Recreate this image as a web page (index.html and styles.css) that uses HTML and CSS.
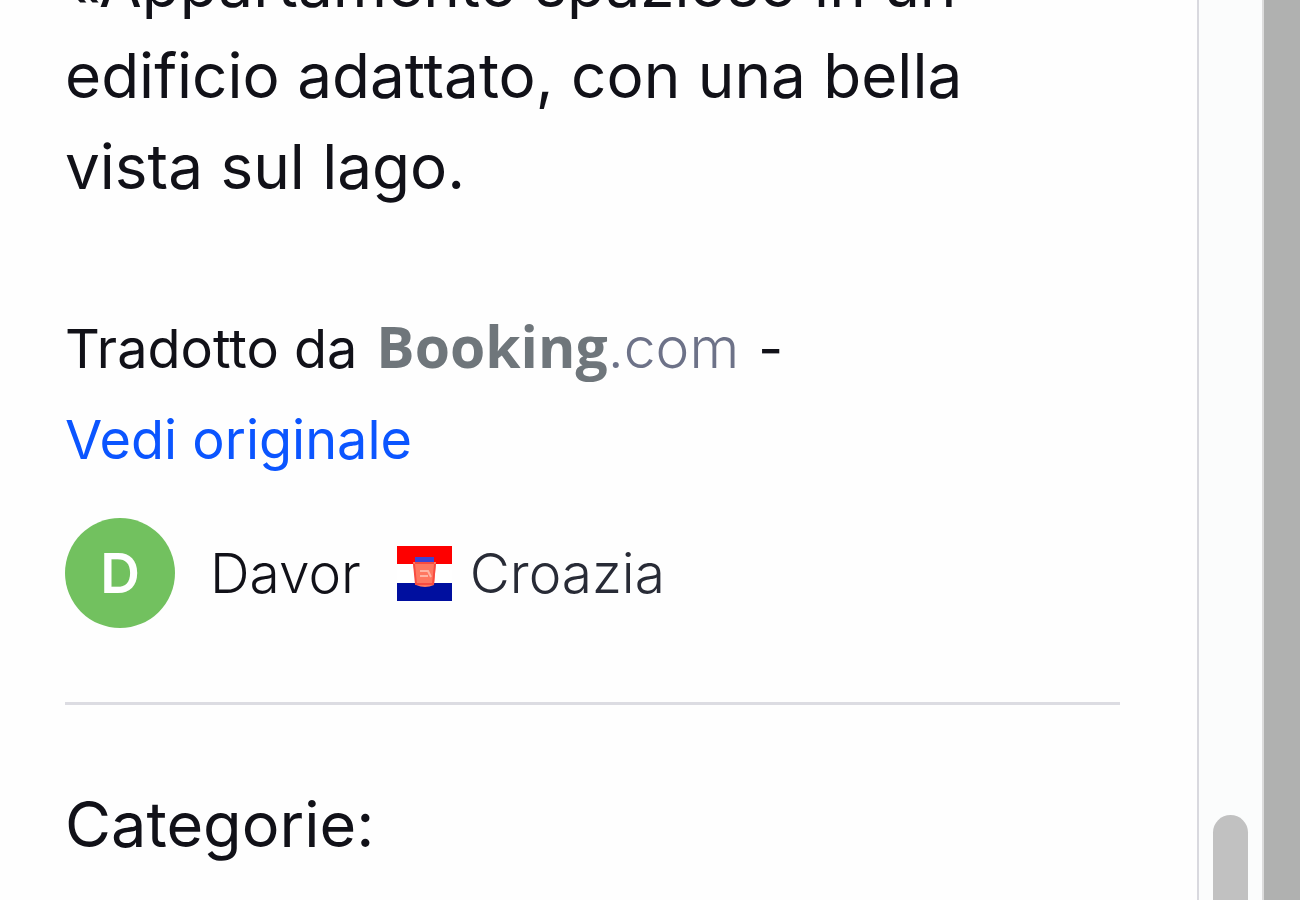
FILE: index.html
```
<!DOCTYPE html>
<html lang="it">
<head>
  <meta charset="UTF-8">
  <meta name="viewport" content="width=device-width, initial-scale=1.0">
  <title>Recensioni degli ospiti</title>
  <link rel="stylesheet" href="styles.css">
</head>
<body>
  <div class="page">
    <main class="panel">
      <!-- Guest review -->
      <article class="review">
        <p class="quote">«Appartamento spazioso in un<br>edificio adattato, con una bella<br>vista sul lago.</p>
        <div class="translation">
          <span>Tradotto da</span>
          <span class="brand"><b>Booking</b>.com</span>
          <span class="dash">-</span>
        </div>
        <a class="original" href="#originale">Vedi originale</a>
        <div class="author">
          <span class="avatar">D</span>
          <span class="name">Davor</span>
          <svg class="flag" viewBox="0 0 55 55" aria-hidden="true">
            <rect width="55" height="55" fill="#fff"/>
            <rect width="55" height="18" fill="#fe0000"/>
            <rect y="37" width="55" height="18" fill="#000f9f"/>
            <path d="M16 16h23l-2 23q-9 4-18 0z" fill="#ff7760"/>
            <path d="M18 11h19v6H18z" fill="#3c43d2"/>
            <path d="M18 17h19M17 18l2 20h17l2-20" fill="none" stroke="#f84b40" stroke-width="2"/>
            <path d="M23 25h8l3 6M23 30h8" fill="none" stroke="#ffb3a3" stroke-width="2"/>
          </svg>
          <span class="country">Croazia</span>
        </div>
      </article>
      <h2 class="categories">Categorie:</h2>
    </main>
    <!-- Scroll track -->
    <div class="track">
      <div class="thumb"></div>
    </div>
    <div class="backdrop"></div>
  </div>
</body>
</html>
```

FILE: styles.css
```
* {
  box-sizing: border-box;
}
body {
  margin: 0;
  font-family: Inter, Roboto, sans-serif;
  color: #111118;
  background: #fefefe;
}
.page {
  display: flex;
  height: 100vh;
  overflow: hidden;
}
.panel {
  flex: 1;
  padding: 0 77px 0 65px;
}
/* the panel is scrolled, so the first line is partly cut off */
.review {
  margin-top: -61px;
  padding-bottom: 74px;
  border-bottom: 3px solid #dcdce2;
}
.quote {
  margin: 0 0 89px;
  font-size: 62px;
  line-height: 91px;
  white-space: nowrap;
}
.translation, .original {
  font-size: 54px;
  line-height: 91px;
}
.translation {
  display: flex;
  align-items: baseline;
  gap: 19px;
}
.brand {
  font-size: 57px;
  font-weight: 300;
  color: #6d7288;
}
.brand b {
  font-family: "Open Sans", sans-serif;
  font-weight: 700;
  color: #6f767b;
}
.original {
  display: block;
  color: #0b55ff;
  text-decoration: none;
}
.author {
  display: flex;
  align-items: center;
  margin-top: 33px;
  font-size: 55px;
  line-height: 88px;
}
.avatar {
  width: 110px;
  height: 110px;
  margin-right: 35px;
  border-radius: 50%;
  background: #72c15f;
  color: #fff;
  font-weight: 600;
  line-height: 110px;
  text-align: center;
}
.name {
  font-weight: 300;
}
.flag {
  width: 55px;
  height: 55px;
  margin: 0 18px 0 36px;
}
.country {
  font-weight: 300;
  color: #282b36;
}
.categories {
  margin: 74px 0 0;
  font-size: 63px;
  font-weight: 400;
  line-height: 91px;
}
.track {
  display: flex;
  flex-direction: column;
  justify-content: flex-end;
  width: 67px;
  padding: 0 14px;
  border-left: 2px solid #d9d9df;
  border-right: 2px solid #dcdcdc;
  background: #fbfcfc;
}
.thumb {
  height: 85px;
  border-radius: 18px 18px 0 0;
  background: #c1c1c1;
}
.backdrop {
  width: 36px;
  background: #b0b1b0;
}
```
